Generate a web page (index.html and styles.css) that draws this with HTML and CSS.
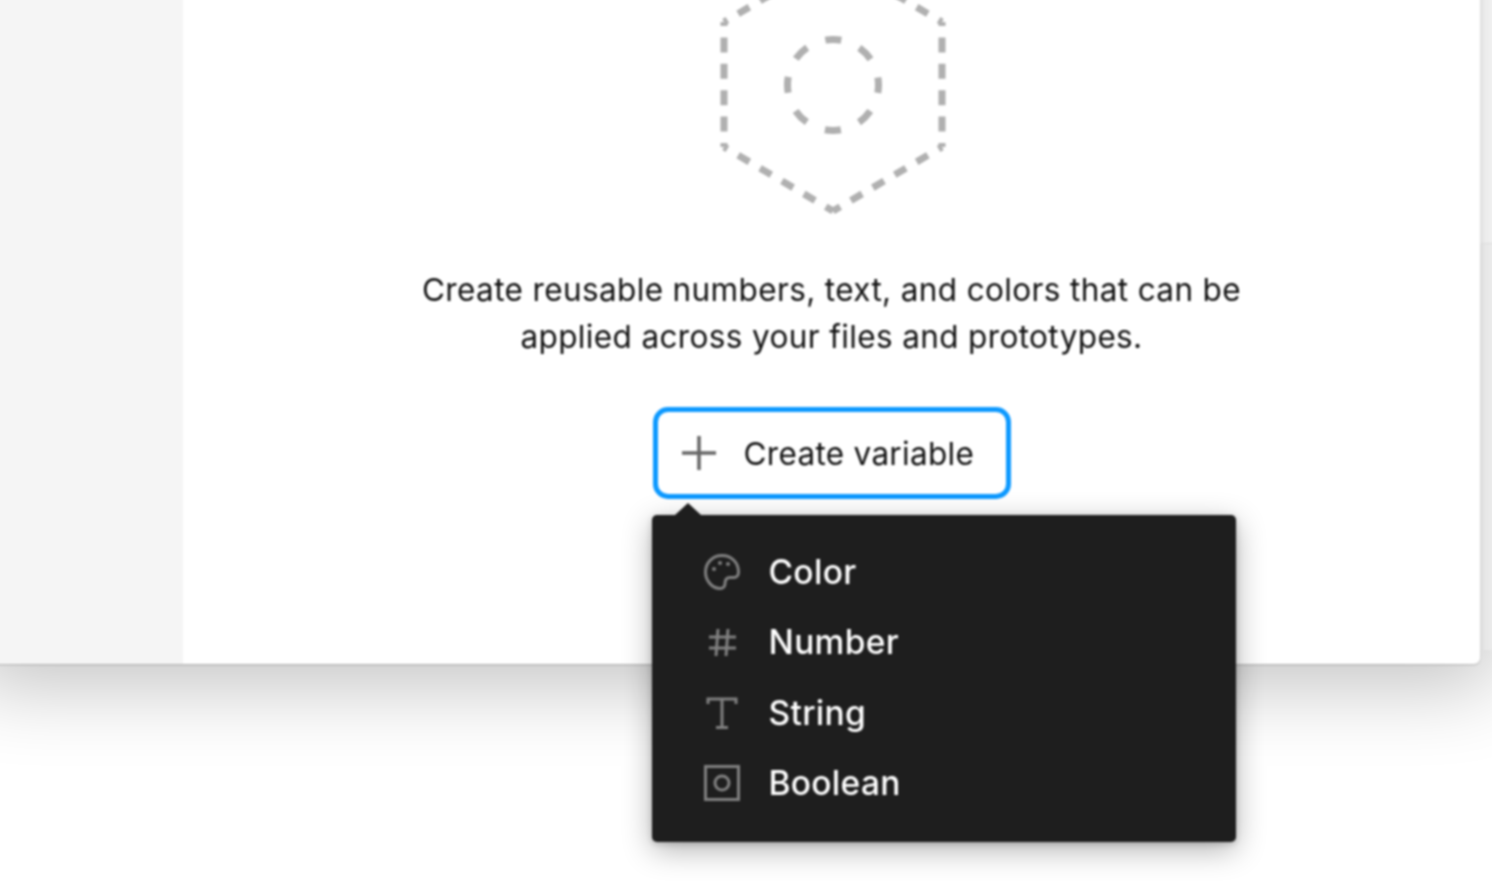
FILE: index.html
```html
<!DOCTYPE html>
<html lang="en">
<head>
<meta charset="utf-8">
<title>Create variable</title>
<link rel="stylesheet" href="styles.css">
</head>
<body>
<div class="stage">
  <div class="window">
    <aside class="sidebar"></aside>
    <main class="main">
      <svg class="hex" width="240" height="270" viewBox="0 0 240 270" aria-hidden="true">
        <g class="hex-edge">
          <line x1="11" y1="203" x2="11" y2="78"/>
          <line x1="229" y1="203" x2="229" y2="78"/>
          <line class="slope" x1="11" y1="203" x2="120" y2="267"/>
          <line class="slope" x1="229" y1="203" x2="120" y2="267"/>
          <line class="slope" x1="11" y1="78" x2="120" y2="14"/>
          <line class="slope" x1="229" y1="78" x2="120" y2="14"/>
        </g>
        <circle class="hex-core" cx="120" cy="141" r="45.5"/>
      </svg>
      <p class="lead">Create reusable numbers, text, and colors that can be<br>applied across your files and prototypes.</p>
      <div class="anchor">
        <button class="create" type="button">
          <svg width="36" height="36" viewBox="0 0 36 36" aria-hidden="true"><path class="plus" d="M18 1v34M1 18h34"/></svg>
          <span>Create variable</span>
        </button>
        <div class="menu">
          <div class="menu-item">
            <svg class="ico" width="38" height="38" viewBox="0 0 38 38" aria-hidden="true"><path class="ico-line" d="M19 2.500C9.500 2.500 2.500 10 2.500 19c0 9 7 16.500 14.500 16.500 3.500 0 5-2.500 5-5 0-3.500 1.500-6 5-6h4c2.500 0 4.500-2 4.500-5.500C35.500 9.500 28.500 2.500 19 2.500z"/><circle class="ico-dot" cx="11" cy="16" r="2"/><circle class="ico-dot" cx="17" cy="10" r="2"/><circle class="ico-dot" cx="25" cy="11" r="2"/></svg>
            <span>Color</span>
          </div>
          <div class="menu-item">
            <svg class="ico" width="38" height="38" viewBox="0 0 38 38" aria-hidden="true"><path class="ico-line" d="M15 6l-2 27M25 6l-2 27M6 14h27M6 25h27"/></svg>
            <span>Number</span>
          </div>
          <div class="menu-item">
            <svg class="ico" width="38" height="38" viewBox="0 0 38 38" aria-hidden="true"><path class="ico-line" d="M5 10V5h28v5M19 5v28M13 33.500h12"/></svg>
            <span>String</span>
          </div>
          <div class="menu-item">
            <svg class="ico" width="38" height="38" viewBox="0 0 38 38" aria-hidden="true"><rect class="ico-line" x="2.500" y="2.500" width="33" height="33"/><circle class="ico-line" cx="19" cy="19" r="7"/></svg>
            <span>Boolean</span>
          </div>
        </div>
      </div>
    </main>
  </div>
  <div class="strip">
    <div class="strip-top"></div>
    <div class="strip-bottom"></div>
  </div>
</div>
</body>
</html>
```
FILE: styles.css
```css
* { box-sizing: border-box; }
html, body { margin: 0; height: 100%; background: #fff; overflow: hidden; }
body { font-family: Inter, "Liberation Sans", sans-serif; color: #111; font-optical-sizing: none; }
.stage { display: flex; height: 676px; width: 1512px; margin: -12px 0 0 -12px; filter: blur(0.8px); }
.window {
  position: relative; z-index: 1;
  flex: none; width: 1492px; height: 676px; display: flex;
  background: #fff;
  border-radius: 0 0 6px 0;
  box-shadow: 0 1px 2px rgba(0,0,0,.2), 0 6px 80px 16px rgba(0,0,0,.24);
}
.sidebar { width: 195px; background: #f5f5f5; }
.main { flex: 1; display: flex; flex-direction: column; align-items: center; justify-content: flex-end; padding-bottom: 165px; }
.hex { display: block; flex: none; margin-left: 3px; }
.hex-edge line { fill: none; stroke: #b0b0b0; stroke-width: 7; stroke-dasharray: 15 11.4; stroke-dashoffset: 11; }
.hex-edge .slope { stroke-dasharray: 13 12.4; stroke-dashoffset: 9; }
.hex-core { fill: none; stroke: #b0b0b0; stroke-width: 7; stroke-dasharray: 16 19.73; stroke-dashoffset: 8; }
.lead { margin: 52px 0 47px; font-size: 31.500px; line-height: 47px; letter-spacing: .37px; text-align: center; color: #111; flex: none; white-space: nowrap; }
.anchor { position: relative; flex: none; }
.create {
  display: flex; align-items: center; gap: 27px;
  width: 358px; height: 92px; padding: 0 0 0 23px;
  background: #fff; border: 5px solid #0d99ff; border-radius: 15px;
  font: inherit; font-size: 31.500px; letter-spacing: .3px; color: #111;
}
.plus { fill: none; stroke: #666; stroke-width: 3.500; }
.menu {
  position: absolute; left: -1px; top: 108px;
  width: 584px; height: 327px; padding: 22px 0 0 51px;
  background: #1e1e1e; border-radius: 5px;
  box-shadow: 0 8px 30px rgba(0,0,0,.3), 0 2px 7px rgba(0,0,0,.2);
  color: #fff; font-size: 33.500px; font-weight: 500; letter-spacing: .3px;
}
.menu::before {
  content: ""; position: absolute; left: 23px; top: -12px;
  border: 13px solid transparent; border-top: 0; border-bottom: 12px solid #1e1e1e;
}
.menu-item { display: flex; align-items: center; gap: 28px; height: 70.300px; }
.ico { flex: none; }
.ico-line { fill: none; stroke: #808080; stroke-width: 3; }
.ico-dot { fill: #808080; }
.strip { position: relative; z-index: 2; flex: none; width: 22px; height: 662px; display: flex; flex-direction: column; }
.strip-top { height: 255px; background: linear-gradient(90deg, #dedede, #ebebeb 20%, #f0f0f0 50%); }
.strip-bottom { flex: 1; background: linear-gradient(90deg, #d8d8d8, #e6e6e6 20%, #ebebeb 50%); border-top: 1px solid #dcdcdc; }
```
